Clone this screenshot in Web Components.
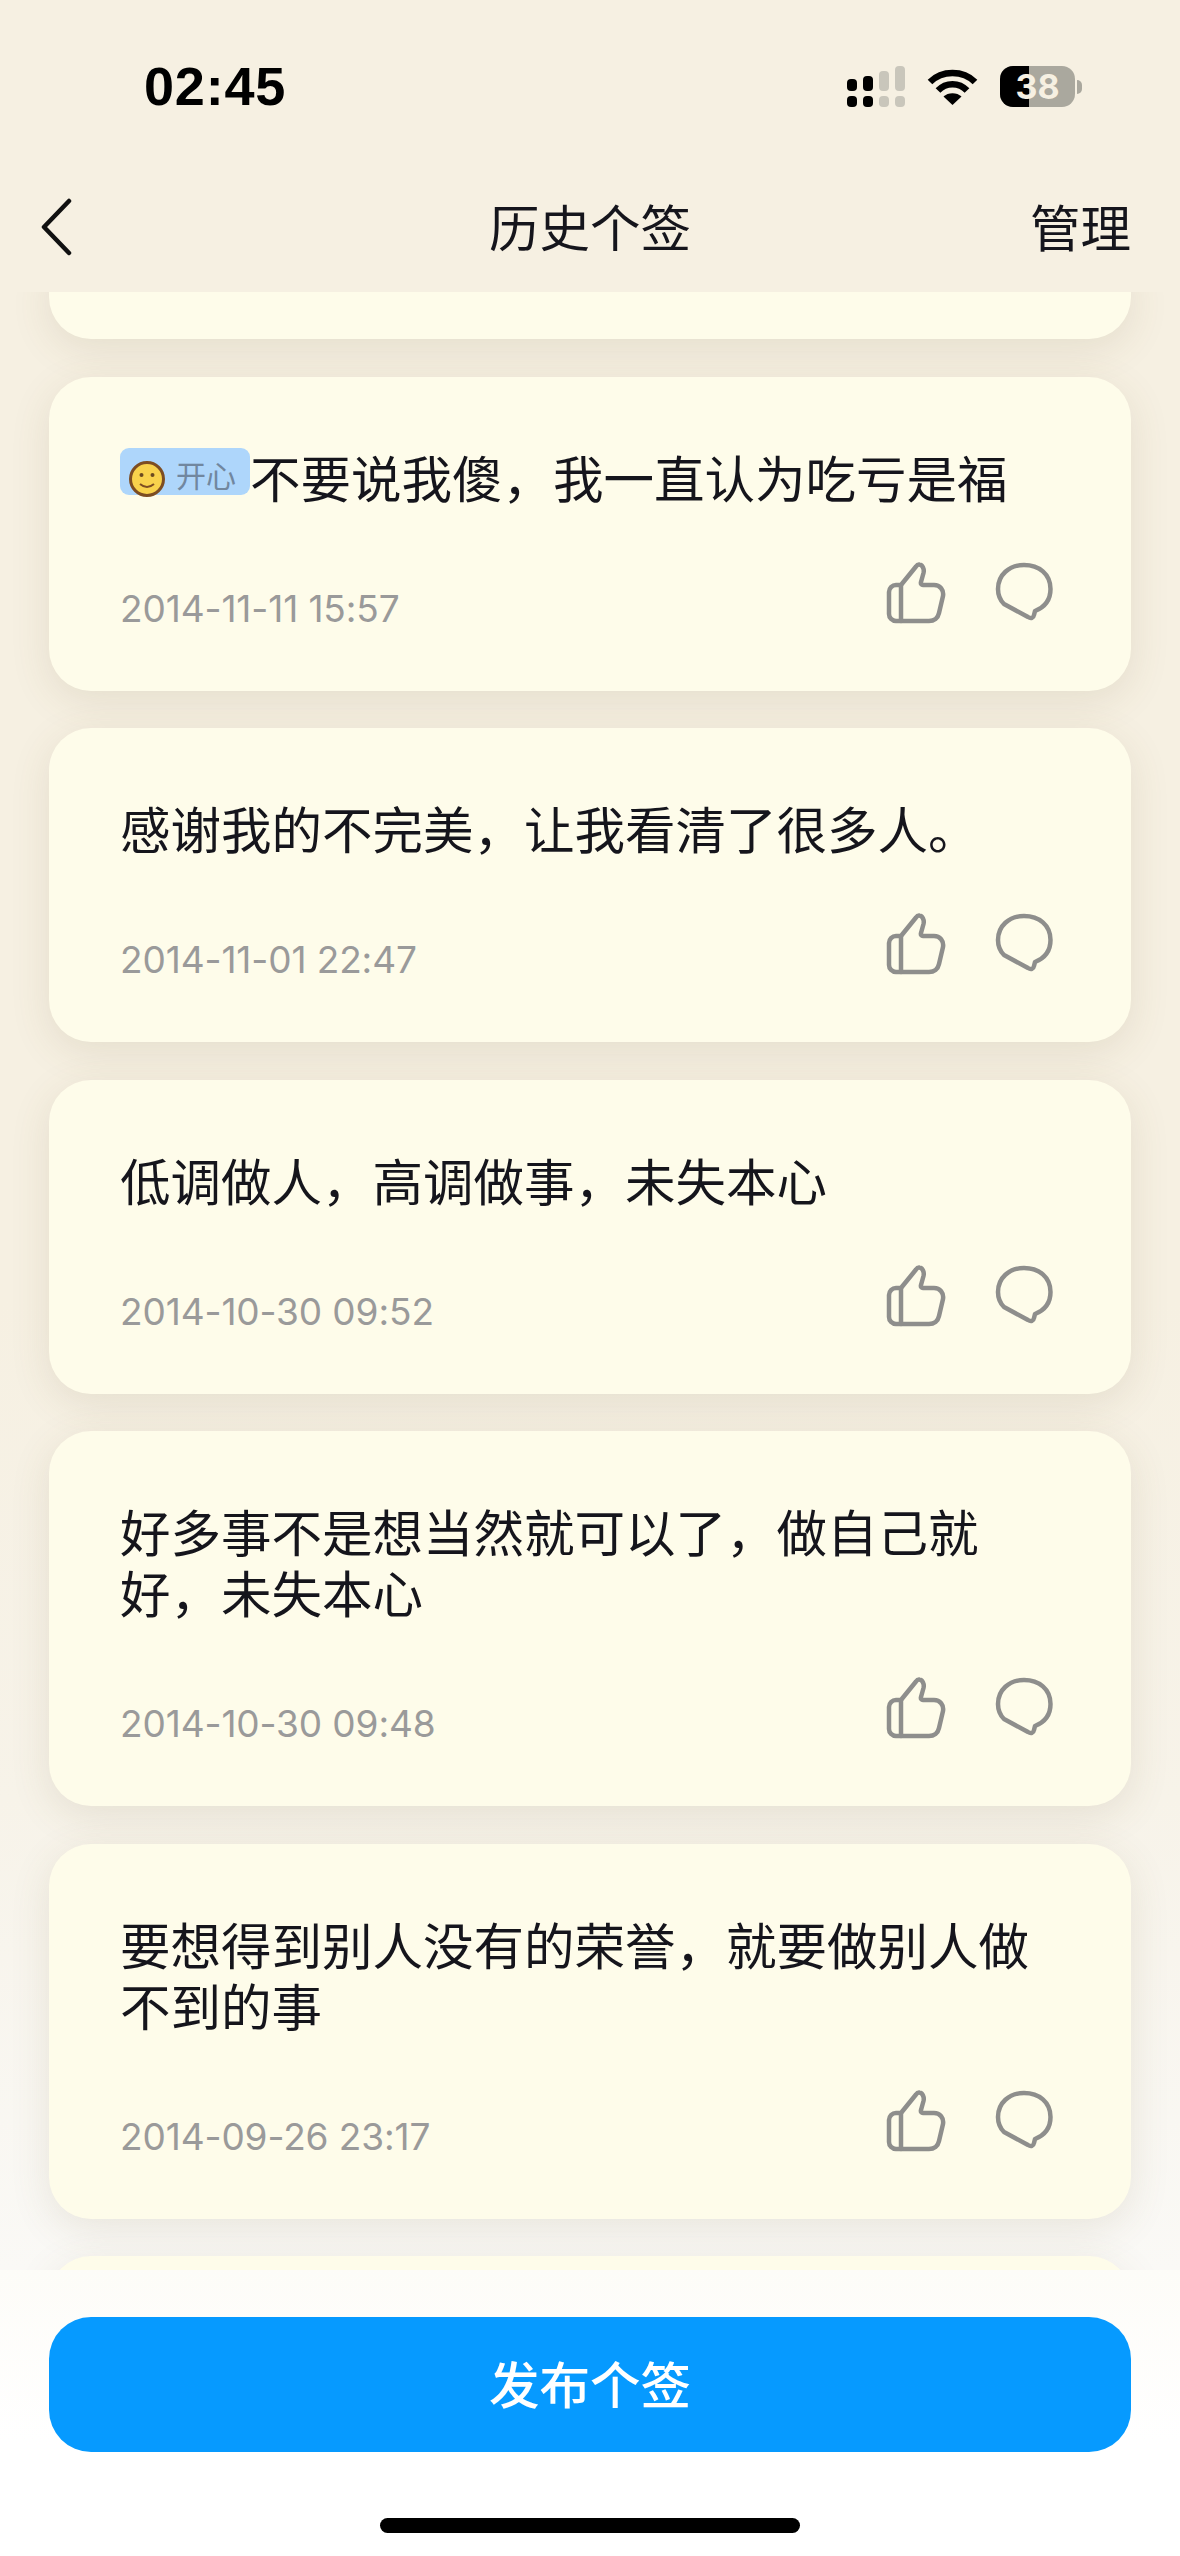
<!DOCTYPE html>
<html lang="zh">
<head>
<meta charset="utf-8">
<title>历史个签</title>
<style>
  html, body { margin: 0; padding: 0; }
  body { font-family: "Noto Sans CJK SC", "Liberation Sans", sans-serif; }
</style>
</head>
<body>
<sign-screen>
  <sign-card slot="list" cut></sign-card>
  <sign-card slot="list" date="2014-11-11 15:57"><mood-tag>开心</mood-tag>不要说我傻，我一直认为吃亏是福</sign-card>
  <sign-card slot="list" date="2014-11-01 22:47">感谢我的不完美，让我看清了很多人。</sign-card>
  <sign-card slot="list" date="2014-10-30 09:52">低调做人，高调做事，未失本心</sign-card>
  <sign-card slot="list" date="2014-10-30 09:48">好多事不是想当然就可以了，做自己就好，未失本心</sign-card>
  <sign-card slot="list" date="2014-09-26 23:17">要想得到别人没有的荣誉，就要做别人做不到的事</sign-card>
  <sign-card slot="list" date="2014-09-20 10:00"></sign-card>
</sign-screen>

<script>
class StatusBar extends HTMLElement {
  constructor() {
    super();
    this.attachShadow({ mode: 'open' });
    this.shadowRoot.innerHTML = `
      <style>
        :host { display: flex; height: 170px; box-sizing: border-box; padding: 66px 98px 0 144px; justify-content: space-between; }
        .time { font: 700 54px/41px "Liberation Sans", sans-serif; letter-spacing: .8px; color: #000; }
        .icons { display: flex; align-items: flex-start; height: 41px; }
        svg { display: block; }
        .batt { position: relative; width: 75px; height: 41px; margin-left: 22px; border-radius: 13px; overflow: hidden; background: #aaa89e; font: 700 34px/41px "Inter", "Liberation Sans", sans-serif; color: #f6f0e2; text-align: center; }
        .batt i { position: absolute; left: 0; top: 0; bottom: 0; width: 39%; background: #000; }
        .batt span { position: relative; }
        .nub { width: 5px; height: 14px; margin: 14px 0 0 2px; border-radius: 0 5px 5px 0; background: #aaa89e; }
      </style>
      <div class="time">02:45</div>
      <div class="icons">
        <svg width="58" height="41" viewBox="0 0 58 41">
          <rect x="0" y="13" width="10" height="12" rx="4" fill="#000"/>
          <rect x="16" y="10" width="10" height="15" rx="4" fill="#000"/>
          <rect x="0" y="30" width="10" height="11" rx="4" fill="#000"/>
          <rect x="16" y="30" width="10" height="11" rx="4" fill="#000"/>
          <rect x="32" y="5" width="10" height="20" rx="4" fill="#c9c6bb"/>
          <rect x="48" y="0" width="10" height="25" rx="4" fill="#c9c6bb"/>
          <rect x="32" y="30" width="10" height="11" rx="4" fill="#c9c6bb"/>
          <rect x="48" y="30" width="10" height="11" rx="4" fill="#c9c6bb"/>
        </svg>
        <svg style="margin:2px 0 0 22px" width="51" height="37" viewBox="0 0 51 37">
          <path d="M3 14C15 2 36 2 48 14" fill="none" stroke="#000" stroke-width="6.500"/>
          <path d="M11 22.500C19 14 32 14 40 22.500" fill="none" stroke="#000" stroke-width="6.500"/>
          <path d="M16.500 28.500C21 24 30 24 34.500 28.500L25.500 37Z" fill="#000"/>
        </svg>
        <div class="batt"><i></i><span>38</span></div>
        <div class="nub"></div>
      </div>`;
  }
}
customElements.define('status-bar', StatusBar);

class NavBar extends HTMLElement {
  constructor() {
    super();
    this.attachShadow({ mode: 'open' });
    this.shadowRoot.innerHTML = `
      <style>
        :host { display: grid; grid-template-columns: 1fr auto 1fr; align-items: center; height: 110px; padding: 0 49px 12px; color: #15151c; font-size: 50.500px; }
        svg { display: block; margin: 4px 0 0 -8px; }
        .manage { justify-self: end; }
      </style>
      <svg width="31" height="58" viewBox="0 0 31 58"><path d="M28 3 3 29l25 26" fill="none" stroke="#111" stroke-width="4.500" stroke-linecap="round" stroke-linejoin="round"/></svg>
      <div>历史个签</div>
      <div class="manage">管理</div>`;
  }
}
customElements.define('nav-bar', NavBar);

class MoodTag extends HTMLElement {
  constructor() {
    super();
    this.attachShadow({ mode: 'open' });
    this.shadowRoot.innerHTML = `
      <style>
        :host { display: inline-flex; align-items: flex-start; vertical-align: 1px; margin: -10px 0; box-sizing: border-box; width: 130px; height: 47px; padding: 0 0 0 9px; gap: 11px; background: #aed6fb; border-radius: 9px; color: #71879f; font-size: 30px; line-height: 52px; }
        svg { display: block; flex: none; margin-top: 13px; }
      </style>
      <svg width="36" height="36" viewBox="0 0 36 36">
        <circle cx="18" cy="18" r="16.500" fill="#f8d24c" stroke="#7d4d22" stroke-width="3"/>
        <circle cx="12.500" cy="14" r="2" fill="#6b4a20"/>
        <circle cx="23.500" cy="14" r="2" fill="#6b4a20"/>
        <path d="M11 23q7 6 14 0" fill="none" stroke="#7d4d22" stroke-width="2"/>
      </svg>
      <slot></slot>`;
  }
}
customElements.define('mood-tag', MoodTag);

class SignCard extends HTMLElement {
  constructor() {
    super();
    this.attachShadow({ mode: 'open' });
    this.shadowRoot.innerHTML = `
      <style>
        :host { display: block; flex: none; box-sizing: border-box; padding: 69px 72px 60px 71px; background: #fefcea; border-radius: 42px; box-shadow: 0 10px 40px rgba(110, 90, 50, .12); color: #15151c; }
        :host([cut]) { height: 88.500px; padding: 0; }
        .text { min-height: 61px; font-size: 50.500px; line-height: 61px; }
        .foot { display: flex; justify-content: space-between; align-items: flex-start; margin-top: 55px; height: 69px; }
        .date { font: 37px/44px "Inter", "Liberation Sans", sans-serif; letter-spacing: -.1px; color: #9a9a9a; margin-top: 25px; }
        .acts { display: flex; gap: 49px; margin-right: 6px; }
        svg { display: block; }
      </style>
      <div class="text"><slot></slot></div>
      <div class="foot">
        <div class="date"></div>
        <div class="acts">
          <svg width="60" height="62" viewBox="0 0 60 62" fill="none" stroke="#8e8e8c" stroke-width="4.500" stroke-linejoin="round" stroke-linecap="round">
            <path d="M15 23H10a7 7 0 0 0-7 7v22a7 7 0 0 0 7 7H43c5 0 9-3 10-8l4-17c1-6-3-11-9-11H37c-1.500 0-2.500-1-2-3l2.500-9c1-4-1-8-4-8.500-1.500-.300-2.500.500-3.500 2Z"/>
            <path d="M15 23v36"/>
          </svg>
          <svg width="58" height="60" viewBox="0 0 58 60" fill="none" stroke="#8e8e8c" stroke-width="4.500" stroke-linejoin="round" stroke-linecap="round">
            <path d="M40 49C50 45 55.500 37 55.500 27 55.500 12 44 3 29 3 14 3 3 13 3 27c0 6 2 11 6 15l24 13c3 2 5.500 1 6-2Z"/>
          </svg>
        </div>
      </div>`;
  }
  connectedCallback() {
    if (this.hasAttribute('cut')) {
      this.shadowRoot.querySelector('.foot').remove();
      return;
    }
    this.shadowRoot.querySelector('.date').textContent = this.getAttribute('date');
  }
}
customElements.define('sign-card', SignCard);

class PublishBar extends HTMLElement {
  constructor() {
    super();
    this.attachShadow({ mode: 'open' });
    this.shadowRoot.innerHTML = `
      <style>
        :host { display: flex; flex-direction: column; align-items: center; box-sizing: border-box; height: 286px; padding: 47px 49px 0; background: linear-gradient(#fdfcf8, #fff 60%); }
        .btn { align-self: stretch; height: 135px; background: #069aff; border-radius: 42px; color: #fff; font-size: 50.500px; font-weight: 500; line-height: 131px; text-align: center; }
        .home { width: 420px; height: 15px; margin-top: 66px; background: #000; border-radius: 8px; }
      </style>
      <div class="btn">发布个签</div>
      <div class="home"></div>`;
  }
}
customElements.define('publish-bar', PublishBar);

class SignScreen extends HTMLElement {
  constructor() {
    super();
    this.attachShadow({ mode: 'open' });
    this.shadowRoot.innerHTML = `
      <style>
        :host { display: flex; flex-direction: column; position: relative; height: 2556px; overflow: hidden; background: linear-gradient(#f6f0e2 0, #f6f0e2 1300px, #f7f3e9 1800px, #faf9f6 2270px); }
        .top { position: relative; z-index: 2; background: #f6f0e2; flex: none; }
        .list { flex: 1; min-height: 0; display: flex; flex-direction: column; gap: 37.500px; padding: 0 49px; margin-top: -41.500px; overflow: hidden; }
        publish-bar { position: absolute; left: 0; right: 0; bottom: 0; }
      </style>
      <div class="top"><status-bar></status-bar><nav-bar></nav-bar></div>
      <div class="list"><slot name="list"></slot></div>
      <publish-bar></publish-bar>`;
  }
}
customElements.define('sign-screen', SignScreen);
</script>
</body>
</html>
